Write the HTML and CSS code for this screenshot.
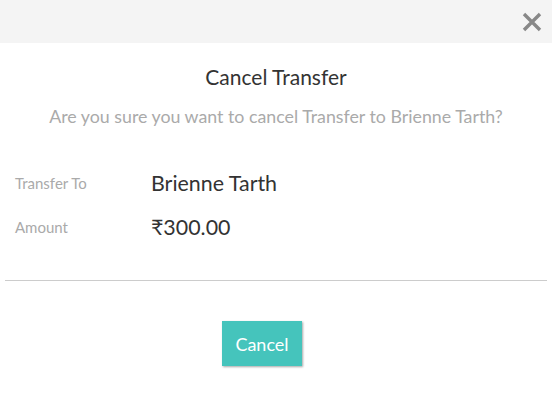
FILE: index.html
```html
<!DOCTYPE html>
<html>
<head>
<meta charset="utf-8">
<link rel="stylesheet" href="styles.css">
</head>
<body>
<div class="modal">
  <div class="modal-header">
    <button class="close" aria-label="Close">
      <svg width="20" height="20" viewBox="0 0 20 20"><path d="M2 2 L18 18 M18 2 L2 18" stroke="#888" stroke-width="3.4" stroke-linecap="butt"/></svg>
    </button>
  </div>
  <div class="modal-body">
    <h2 class="title">Cancel Transfer</h2>
    <p class="subtitle">Are you sure you want to cancel Transfer to Brienne Tarth?</p>
    <div class="details">
      <div class="row"><span class="label">Transfer To</span><span class="value">Brienne Tarth</span></div>
      <div class="row"><span class="label">Amount</span><span class="value">₹300.00</span></div>
    </div>
    <hr class="divider">
    <div class="actions"><button class="btn">Cancel</button></div>
  </div>
</div>
</body>
</html>
```
FILE: styles.css
```css
* { box-sizing: border-box; }
html, body { margin: 0; padding: 0; background: #fff; }
body { font-family: Lato, "Open Sans", sans-serif; width: 552px; height: 420px; overflow: hidden; }
.modal-header {
  height: 43px;
  background: #f4f4f4;
  display: flex;
  justify-content: flex-end;
  align-items: center;
  padding-right: 10px;
}
.close { background: none; border: 0; padding: 0; width: 20px; height: 20px; display: flex; }
.modal-body { padding: 0 5px; }
.title {
  margin: 22px 0 0;
  text-align: center;
  font-weight: 400;
  font-size: 21px;
  line-height: 24px;
  color: #333;
}
.subtitle {
  margin: 17px 0 0;
  text-align: center;
  font-size: 17.8px;
  line-height: 20px;
  color: #aaa;
}
.details { margin-top: 45px; padding-left: 10px; }
.row { display: flex; align-items: center; height: 24px; margin-bottom: 20px; }
.label { width: 136px; font-size: 15px; color: #aaa; }
.value { font-size: 21.4px; color: #333; }
.divider { border: 0; border-top: 1px solid #ccc; margin: 41px 0 0; }
.actions { display: flex; justify-content: center; margin-top: 40px; padding-right: 28px; }
.btn {
  font-family: inherit;
  background: #45c4bc;
  color: #fff;
  border: 0;
  width: 80px;
  height: 45px;
  font-size: 18px;
  box-shadow: 1px 1px 2px rgba(0,0,0,0.35);
  padding: 0;
  border-radius: 0;
}
```
